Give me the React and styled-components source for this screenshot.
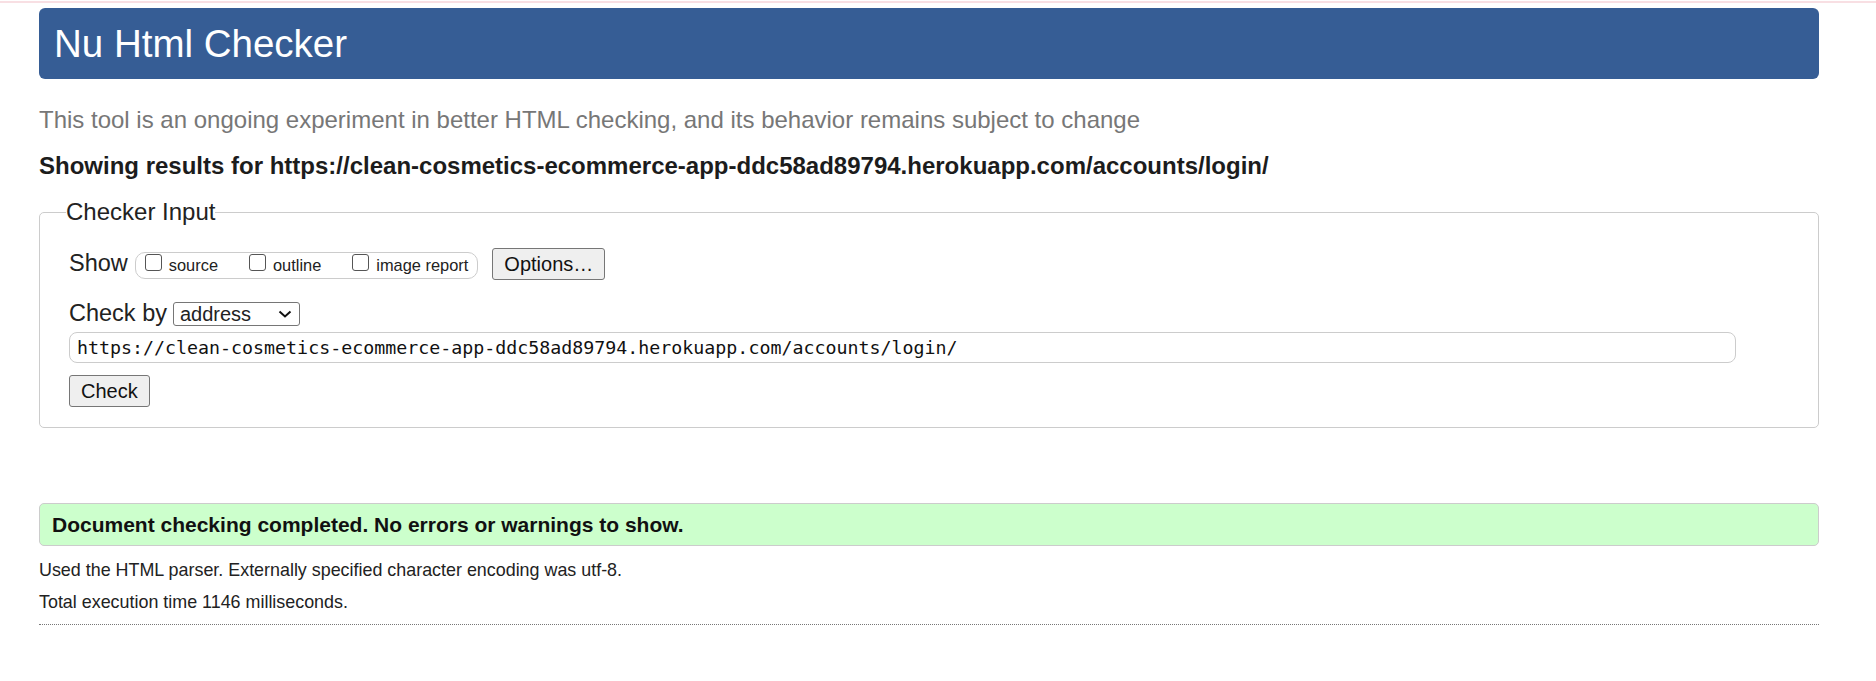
import React from "react";
import styled, { createGlobalStyle } from "styled-components";

const url = "https://clean-cosmetics-ecommerce-app-ddc58ad89794.herokuapp.com/accounts/login/";

function App() {
    return (
        <>
            <Global />
            <TopRule />
            <Page>
                <Title>Nu Html Checker</Title>
                <Intro>This tool is an ongoing experiment in better HTML checking, and its behavior remains subject to change</Intro>
                <Results>Showing results for {url}</Results>
                <InputBox>
                    <Legend>Checker Input</Legend>
                    <Row>
                        <Label>Show</Label>
                        <Pill>
                            <Option><Box type="checkbox" />source</Option>
                            <Option><Box type="checkbox" />outline</Option>
                            <Option $last><Box type="checkbox" />image report</Option>
                        </Pill>
                        <Button $wide>Options…</Button>
                    </Row>
                    <Row $top={20}>
                        <Label>Check by</Label>
                        <Select>
                            address
                            <svg width="14" height="8" viewBox="0 0 14 8">
                                <path d="M1.5 1.5 L7 6.5 L12.5 1.5" fill="none" stroke="#111" strokeWidth="2" />
                            </svg>
                        </Select>
                    </Row>
                    <UrlField defaultValue={url} spellCheck={false} />
                    <Button>Check</Button>
                </InputBox>
                <Success>Document checking completed. No errors or warnings to show.</Success>
                <Note $top={12}>Used the HTML parser. Externally specified character encoding was utf-8.</Note>
                <Note $top={8}>Total execution time 1146 milliseconds.</Note>
                <Divider />
            </Page>
        </>
    )
}

export default App;

const Global = createGlobalStyle`
    body {
        margin: 0;
        background: #fff;
        color: #222;
        font-family: "Liberation Sans", Arial, sans-serif;
    }
`
const TopRule = styled.div`
    height: 2px;
    margin-top: 1px;
    background: #f8dfe3;
`
const Page = styled.main`
    padding: 0 57px 40px 39px;
`
const Title = styled.h1`
    display: flex;
    align-items: center;
    height: 71px;
    margin: 5px 0 0;
    padding: 0 15px;
    border-radius: 6px;
    background: #365d95;
    color: #fff;
    font-size: 38.5px;
    font-weight: normal;
`
const Intro = styled.p`
    margin: 26px 0 0;
    font-size: 24px;
    line-height: 30px;
    color: #777;
`
const Results = styled.p`
    margin: 16px 0 0;
    font-size: 24px;
    line-height: 30px;
    font-weight: bold;
    color: #1c1c1c;
`
const InputBox = styled.fieldset`
    margin: 17px 0 0;
    padding: 0 29px 20px;
    border: 1px solid #ccc;
    border-radius: 5px;
`
const Legend = styled.legend`
    margin-left: -3px;
    padding: 0;
    font-size: 24px;
    line-height: 28px;
`
const Row = styled.div`
    display: flex;
    align-items: baseline;
    margin-top: ${p => p.$top ?? 22}px;
`
const Label = styled.span`
    font-size: 23.5px;
    margin-right: 7px;
`
const Pill = styled.span`
    display: flex;
    align-items: baseline;
    height: 25px;
    padding: 0 9px 0 9px;
    border: 1px solid #ccc;
    border-radius: 10px;
    font-size: 16.4px;
    line-height: 25px;
`
const Option = styled.label`
    display: flex;
    align-items: baseline;
    margin-right: ${p => p.$last ? 0 : 31}px;
`
const Box = styled.input`
    appearance: none;
    width: 17px;
    height: 17px;
    margin: 0 7px 1px 0;
    border: 1px solid #555;
    border-radius: 3px;
    background: #fff;
`
const Button = styled.button`
    height: 32px;
    margin-left: ${p => p.$wide ? 14 : 0}px;
    padding: 0 11px;
    border: 1px solid #767676;
    border-radius: 3px;
    background: #efefef;
    color: #111;
    font-family: "Liberation Sans", Arial, sans-serif;
    font-size: 20px;
`
const Select = styled.span`
    display: inline-flex;
    align-items: center;
    justify-content: space-between;
    box-sizing: border-box;
    width: 127px;
    height: 24px;
    padding: 0 7px 0 6px;
    margin-left: -1px;
    border: 1px solid #767676;
    border-radius: 3px;
    font-size: 20px;
    line-height: 22px;
`
const UrlField = styled.input`
    display: block;
    box-sizing: border-box;
    width: 1667px;
    height: 31px;
    margin: 5px 0 12px;
    padding: 0 7px;
    border: 1px solid #ccc;
    border-radius: 8px;
    font-family: "DejaVu Sans Mono", "Liberation Mono", monospace;
    font-size: 18.3px;
    color: #111;
    outline: none;
`
const Success = styled.div`
    margin-top: 75px;
    height: 41px;
    padding: 0 12px;
    display: flex;
    align-items: center;
    border: 1px solid #ccc;
    border-radius: 5px;
    background: #ccffcc;
    font-size: 21px;
    font-weight: bold;
    color: #111;
`
const Note = styled.p`
    margin: ${p => p.$top}px 0 0;
    font-size: 17.9px;
    line-height: 24px;
`
const Divider = styled.hr`
    margin: 10px 0 0;
    border: 0;
    border-top: 1px dotted #777;
`
